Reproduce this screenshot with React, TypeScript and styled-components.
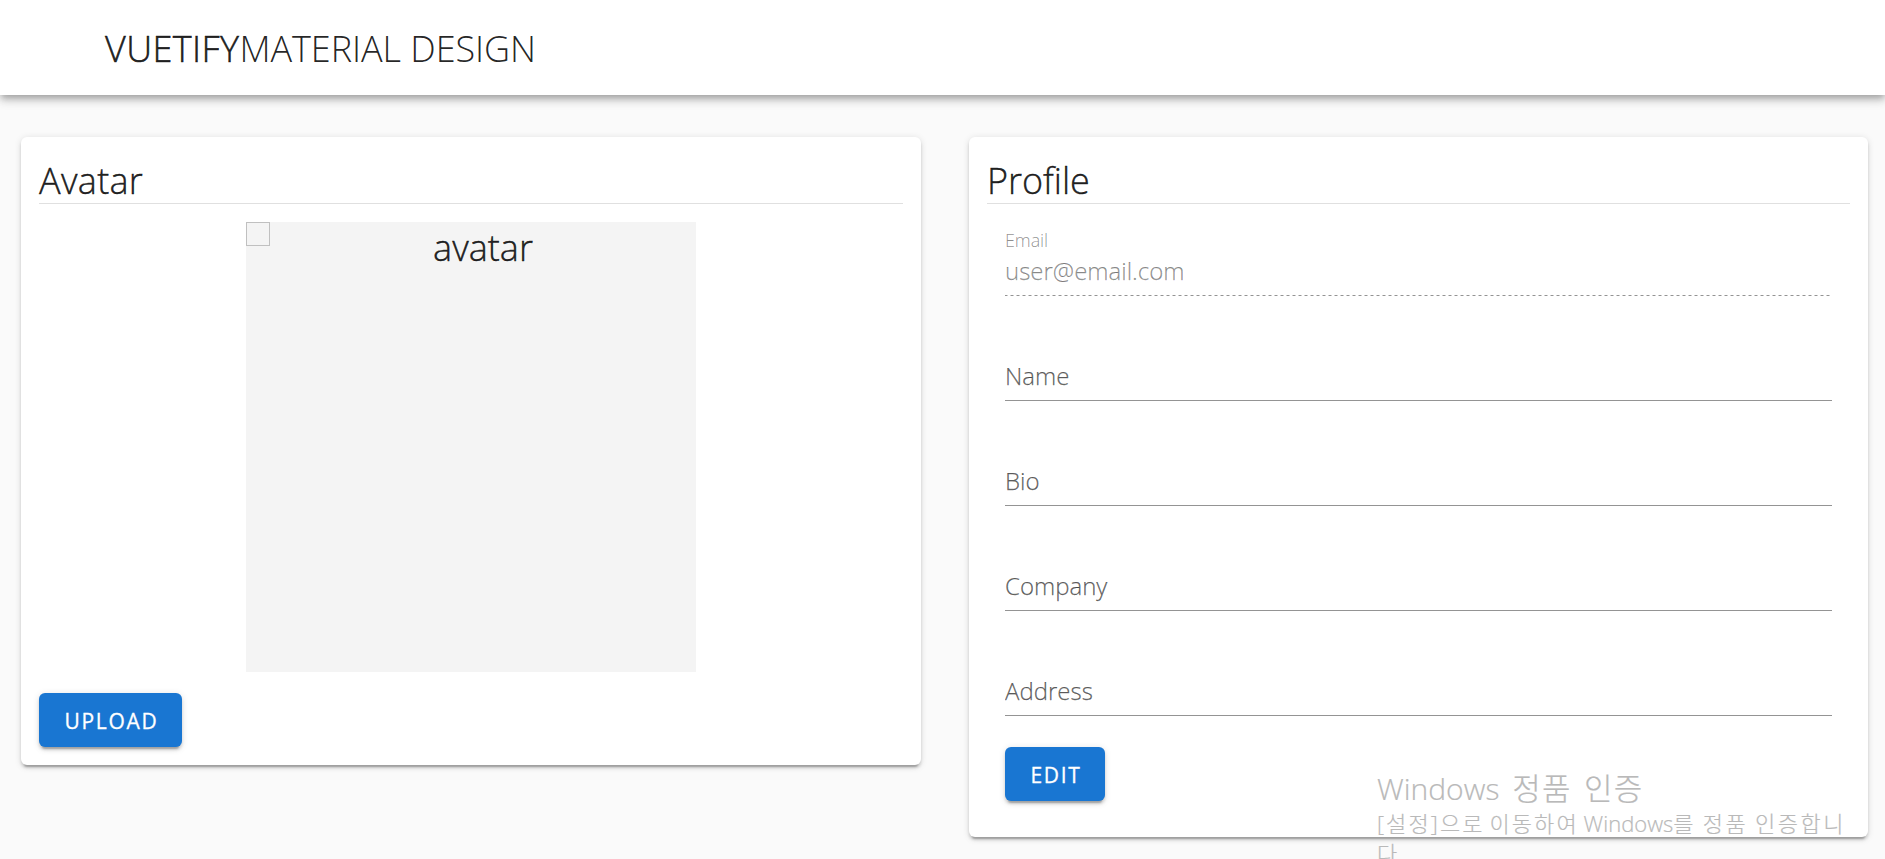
import React from 'react';
import styled, { createGlobalStyle } from 'styled-components';

const GlobalStyle = createGlobalStyle`
  *, *::before, *::after { box-sizing: border-box; }
  html, body { margin: 0; height: 859px; overflow: hidden; background: #fafafa; }
  body {
    font-family: "Open Sans", "Noto Sans CJK KR", sans-serif;
    font-weight: 300;
    color: rgba(0, 0, 0, 0.87);
  }
`;

const elevation2 = `
  0 4.5px 1.5px -3px rgba(0, 0, 0, 0.2),
  0 3px 3px 0 rgba(0, 0, 0, 0.14),
  0 1.5px 7.5px 0 rgba(0, 0, 0, 0.12)`;

const Page = styled.div`
  position: relative;
  height: 859px;
  overflow: hidden;
`;

const Header = styled.header`
  height: 95px;
  padding-left: 105px;
  background: #fff;
  box-shadow:
    0 3px 6px -1.5px rgba(0, 0, 0, 0.2),
    0 6px 7.5px 0 rgba(0, 0, 0, 0.14),
    0 1.5px 15px 0 rgba(0, 0, 0, 0.12);
  font-size: 36px;
  line-height: 98px;
  white-space: nowrap;
`;

const Brand = styled.span`
  letter-spacing: 0.4px;
  -webkit-text-stroke: 0.5px currentColor;
`;

const Product = styled.span`
  letter-spacing: -0.05px;
`;

const Columns = styled.main`
  display: grid;
  grid-template-columns: 900px 899px;
  column-gap: 48px;
  align-items: start;
  padding: 42px 17px 0 21px;
`;

const Card = styled.section`
  padding: 18px;
  background: #fff;
  border-radius: 6px;
  box-shadow: ${elevation2};
`;

const CardTitle = styled.h2<{ $track: number }>`
  height: 49px;
  margin: 0 0 18px;
  border-bottom: 1px solid #e0e0e0;
  font-size: 36px;
  font-weight: 300;
  line-height: 52px;
  letter-spacing: ${(p) => p.$track}px;
  -webkit-text-stroke: 0.4px currentColor;
`;

const Picture = styled.div`
  display: flex;
  width: 450px;
  height: 450px;
  margin: 0 auto 21px;
  background: #f4f4f4;
  font-size: 36px;
  line-height: 52px;
`;

const MissingIcon = styled.span`
  width: 24px;
  height: 24px;
  border: 1px solid #c0c0c0;
`;

const AltText = styled.span`
  flex: 1;
  text-align: center;
  -webkit-text-stroke: 0.4px currentColor;
`;

const Button = styled.button<{ $width: number }>`
  display: block;
  width: ${(p) => p.$width}px;
  height: 54px;
  padding: 2px 0 0 2px;
  border: 0;
  border-radius: 6px;
  background: #1976d2;
  box-shadow: ${elevation2};
  color: #fff;
  font: 400 21px/52px "Open Sans", sans-serif;
  letter-spacing: 1.7px;
  text-align: center;
  -webkit-text-stroke: 0.3px currentColor;
`;

const Form = styled.form`
  padding: 0 18px 18px;
`;

const Field = styled.label`
  display: block;
  height: 105px;
  padding-top: 7px;
`;

const Caption = styled.span`
  display: block;
  height: 22px;
  color: rgba(0, 0, 0, 0.45);
  font-size: 18px;
  line-height: 22px;
  letter-spacing: -0.1px;
`;

const Input = styled.input`
  display: block;
  width: 100%;
  height: 39px;
  margin-bottom: 5px;
  padding: 0;
  border: 0;
  outline: 0;
  background: transparent;
  color: rgba(0, 0, 0, 0.87);
  font: 300 24px/39px "Open Sans", sans-serif;
  -webkit-text-stroke: 0.25px currentColor;

  &::placeholder {
    color: rgba(0, 0, 0, 0.6);
    opacity: 1;
  }

  &:disabled {
    color: rgba(0, 0, 0, 0.42);
  }
`;

const Underline = styled.span<{ $dashed?: boolean }>`
  display: block;
  height: 1px;
  background: ${(p) =>
    p.$dashed
      ? 'repeating-linear-gradient(90deg, #949494 0 2px, #cacaca 2px 3px, transparent 3px 5px, #cacaca 5px 6px)'
      : '#949494'};
`;

const Watermark = styled.aside`
  position: absolute;
  left: 1377px;
  top: 769px;
  width: 480px;
  color: #b9b9b9;
  white-space: nowrap;
  -webkit-text-stroke: 0.2px currentColor;
`;

const WatermarkTitle = styled.div`
  height: 39px;
  font-size: 30px;
  line-height: 39px;
`;

const WatermarkText = styled.div`
  height: 30px;
  font-size: 22px;
  line-height: 30px;
`;

const Hangul = styled.span<{ $track: number; $space: number }>`
  letter-spacing: ${(p) => p.$track}px;
  word-spacing: ${(p) => p.$space}px;
`;

const HangulTitle = styled(Hangul)`
  margin-left: 5px;
  font-size: 31px;
`;

const fields = ['Name', 'Bio', 'Company', 'Address'];

export default function App() {
  return (
    <Page>
      <GlobalStyle />
      <Header>
        <Brand>VUETIFY</Brand>
        <Product>MATERIAL DESIGN</Product>
      </Header>
      <Columns>
        <Card>
          <CardTitle $track={0.3}>Avatar</CardTitle>
          <Picture>
            <MissingIcon />
            <AltText>avatar</AltText>
          </Picture>
          <Button $width={143}>UPLOAD</Button>
        </Card>
        <Card>
          <CardTitle $track={-0.05}>Profile</CardTitle>
          <Form>
            <Field>
              <Caption>Email</Caption>
              <Input disabled defaultValue="user@email.com" />
              <Underline $dashed />
            </Field>
            {fields.map((name) => (
              <Field key={name}>
                <Caption />
                <Input placeholder={name} />
                <Underline />
              </Field>
            ))}
            <Button type="button" $width={100}>EDIT</Button>
          </Form>
        </Card>
      </Columns>
      <Watermark>
        <WatermarkTitle>
          Windows <HangulTitle $track={1.2} $space={3.2}>정품 인증</HangulTitle>
        </WatermarkTitle>
        <WatermarkText>
          <Hangul $track={2.1} $space={-3}>[설정]으로 이동하여 </Hangul>
          Windows
          <Hangul $track={2.5} $space={-1.5}>를 정품 인증합니</Hangul>
        </WatermarkText>
        <WatermarkText>다</WatermarkText>
      </Watermark>
    </Page>
  );
}
